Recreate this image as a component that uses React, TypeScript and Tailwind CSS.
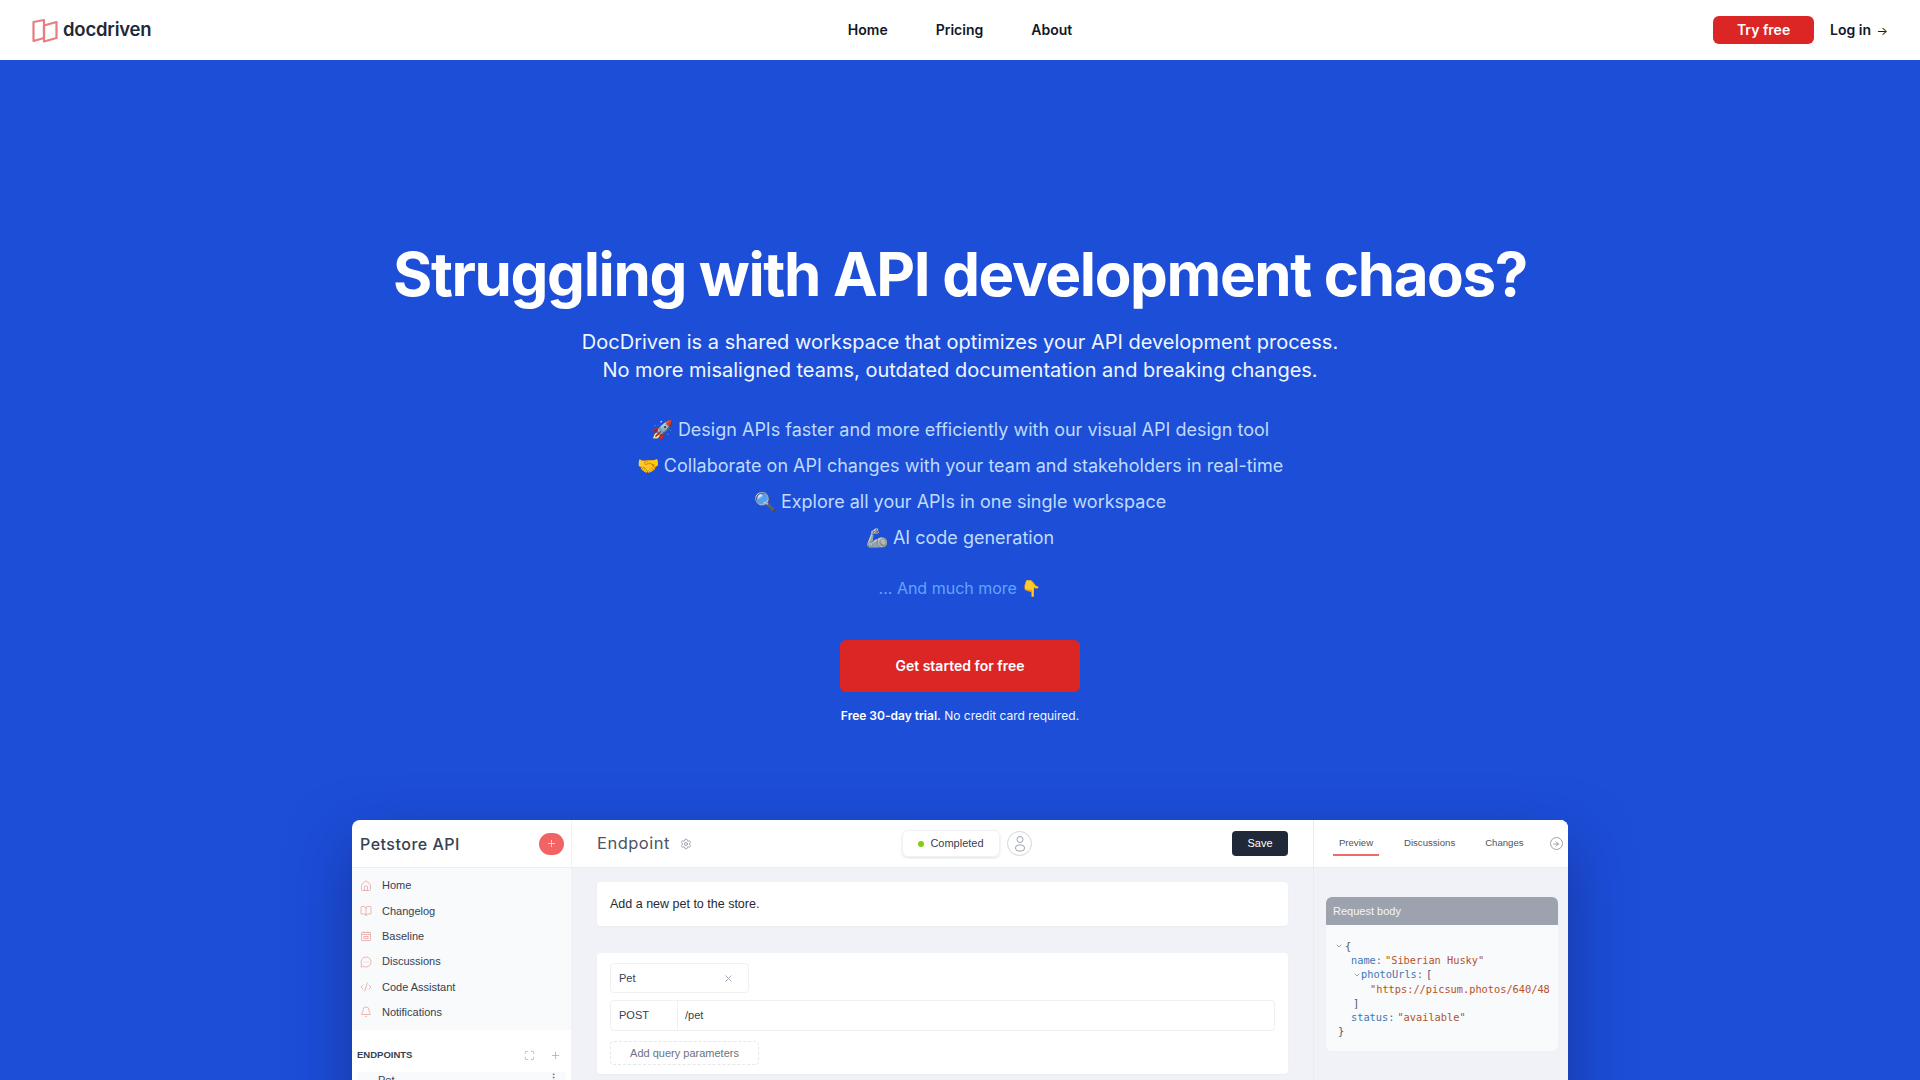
import { Home, BookOpen, MessageCircleMore, CodeXml, Bell, Plus, Maximize, Settings, X, ChevronDown, ArrowRight, MoreVertical } from "lucide-react"

const CalendarIcon = ({ size, color, strokeWidth }: { size: number; color: string; strokeWidth: number }) => (
  <svg width={size} height={size} viewBox="0 0 24 24" fill="none" stroke={color} strokeWidth={strokeWidth}>
    <rect x="3" y="5" width="18" height="16" rx="1" />
    <path d="M3 9h18M8 2v4M16 2v4" />
    <rect x="8" y="13" width="8" height="4" />
  </svg>
)

const sidebarItems = [
  { label: "Home", icon: Home },
  { label: "Changelog", icon: BookOpen },
  { label: "Baseline", icon: CalendarIcon },
  { label: "Discussions", icon: MessageCircleMore },
  { label: "Code Assistant", icon: CodeXml },
  { label: "Notifications", icon: Bell },
]

const bullets = [
  "🚀 Design APIs faster and more efficiently with our visual API design tool",
  "🤝 Collaborate on API changes with your team and stakeholders in real-time",
  "🔍 Explore all your APIs in one single workspace",
  "🦾 AI code generation",
]

const Logo = () => (
  <svg width="26" height="25" viewBox="0 0 26 25" fill="none" stroke="#e57f7f" strokeWidth="2.2" strokeLinejoin="round">
    <path d="M1.5 4 L12 2 V20 L1.5 23 Z" />
    <path d="M12 7.5 L24.5 4 V20 L12 23.5 Z" />
  </svg>
)

const Avatar = () => (
  <svg width="14" height="18" viewBox="0 0 14 18" fill="none" stroke="#9ca3af" strokeWidth="1">
    <circle cx="7" cy="4.5" r="3" />
    <rect x="2.5" y="10" width="9" height="6" rx="3" />
  </svg>
)

const App = () => {
  return (
    <div className="h-screen overflow-hidden bg-[#1d4ed8] font-['Inter',sans-serif]">
      <nav className="h-[60px] bg-white flex items-center justify-between pl-8 pr-[32px] relative">
        <div className="flex items-center gap-[5px] w-[400px]">
          <Logo />
          <span className="text-[18.5px] font-semibold text-[#1f2937] tracking-[-0.2px]">docdriven</span>
        </div>
        <ul className="flex gap-12 text-[14px] font-semibold text-[#111827] mb-[2px]">
          <li>Home</li>
          <li>Pricing</li>
          <li>About</li>
        </ul>
        <div className="flex items-center justify-end gap-4 w-[400px]">
          <button className="w-[101px] h-[28px] pb-[2px] rounded-md bg-[#dc2626] text-white text-[14px] font-semibold">Try free</button>
          <span className="text-[14px] font-semibold text-[#111827] mb-[2px]">Log in <span className="font-normal text-[12px] ml-[2px]">→</span></span>
        </div>
      </nav>

      <section className="flex flex-col items-center pt-[178px]">
        <h1 className="text-[60px] leading-[72px] font-bold text-white tracking-[-1.37px]">Struggling with API development chaos?</h1>
        <p className="mt-[18px] text-[20px] leading-[28px] text-[#eff6ff] text-center">
          DocDriven is a shared workspace that optimizes your API development process.
          <br />
          No more misaligned teams, outdated documentation and breaking changes.
        </p>
        <ul className="mt-[32px] flex flex-col gap-2 text-[18px] leading-[28px] text-[#bfdbfe] text-center">
          {bullets.map((b) => (
            <li key={b}>{b}</li>
          ))}
        </ul>
        <p className="mt-[22px] text-[16px] leading-[28px] text-[#60a5fa]">... And much more 👇</p>
        <button className="mt-[38px] w-[240px] h-[52px] pb-[2px] rounded-md bg-[#dc2626] text-white text-[14px] font-semibold">Get started for free</button>
        <p className="mt-[14px] text-[12px] leading-[20px] text-[#eff6ff]">
          <span className="font-semibold text-white">Free 30-day trial.</span> No credit card required.
        </p>

        <div className="mt-[94px] w-[1216px] h-[500px] shrink-0 flex rounded-t-lg overflow-hidden bg-white shadow-[0_25px_60px_rgba(15,35,120,0.6)] font-['Liberation_Sans',sans-serif]">
          {/* sidebar */}
          <aside className="w-[220px] shrink-0 border-r border-[#f1f2f5]">
            <div className="h-[48px] flex items-center justify-between pl-2 pr-[7px] border-b border-[#eceef2]">
              <span className="text-[16px] text-[#374151] font-['Inter',sans-serif] font-medium tracking-[0.5px]">Petstore API</span>
              <span className="w-[25px] h-[22px] rounded-full bg-[#f26464] flex items-center justify-center">
                <Plus size={11} color="#fbd5d5" />
              </span>
            </div>
            <ul className="bg-[#f9fafb] pt-[5px] h-[162px]">
              {sidebarItems.map((item) => (
                <li key={item.label} className="h-[25.3px] flex items-center gap-[10px] pl-[8px] text-[11px] text-[#374151]">
                  <item.icon size={12} color="#e8a0a0" strokeWidth={1.5} />
                  {item.label}
                </li>
              ))}
            </ul>
            <div className="flex items-center justify-between pl-[5px] pr-[10px] mt-[17px] h-[16px]">
              <span className="text-[9.5px] font-bold text-[#374151]">ENDPOINTS</span>
              <div className="flex items-center gap-[15px]">
                <Maximize size={11} color="#9ca3af" strokeWidth={1.5} />
                <Plus size={11} color="#9ca3af" strokeWidth={1.5} />
              </div>
            </div>
            <div className="mx-[5px] mt-[9px] h-[26px] bg-[#f9fafb] rounded flex items-start justify-between pl-[21px] pr-[7px] text-[11px] text-[#374151]">
              <span>Pet</span>
              <MoreVertical size={11} color="#6b7280" />
            </div>
          </aside>

          {/* main */}
          <main className="w-[742px] shrink-0 bg-[#f0f2f7] border-r border-[#e9ebf0]">
            <div className="h-[48px] bg-white border-b border-[#eceef2] flex items-center pl-[25px] pr-[25px]">
              <div className="flex items-center gap-[10px] w-[305px]">
                <span className="text-[16.5px] text-[#4b5563] font-['Inter',sans-serif] tracking-[0.5px]">Endpoint</span>
                <Settings size={12} color="#9ca3af" />
              </div>
              <span className="w-[98px] h-[27px] rounded-md border border-[#f0f1f4] shadow-sm flex items-center justify-center gap-[6px] text-[11px] text-[#374151]">
                <span className="w-[6px] h-[6px] rounded-full bg-[#84cc16]" />
                Completed
              </span>
              <span className="ml-[7px] w-[25px] h-[25px] rounded-full border border-[#d1d5db] flex items-center justify-center">
                <Avatar />
              </span>
              <button className="ml-auto w-[56px] h-[25px] rounded-sm bg-[#1f2937] text-white text-[11px]">Save</button>
            </div>
            <div className="pl-[25px] pr-[25px] pt-[14px]">
              <div className="h-[44px] bg-white rounded flex items-center px-[13px] text-[12.5px] text-[#1f2937] shadow-[0_1px_2px_rgba(0,0,0,0.03)]">Add a new pet to the store.</div>
              <div className="mt-[27px] bg-white rounded p-[13px] pt-[10px] pb-[9px] shadow-[0_1px_2px_rgba(0,0,0,0.03)]">
                <div className="w-[139px] h-[30px] border border-[#eef0f3] rounded flex items-center justify-between pl-2 pr-[14px] text-[11px] text-[#374151]">
                  Pet
                  <X size={11} color="#9ca3af" />
                </div>
                <div className="mt-[7px] h-[31px] flex text-[11px] text-[#374151]">
                  <div className="w-[68px] border border-[#eef0f3] rounded-l flex items-center pl-2">POST</div>
                  <div className="flex-1 border border-l-0 border-[#eef0f3] rounded-r flex items-center pl-[7px]">/pet</div>
                </div>
                <div className="mt-[10px] w-[149px] h-[24px] border border-dashed border-[#e5e7eb] rounded flex items-center justify-center text-[11px] text-[#6b7280]">Add query parameters</div>
              </div>
            </div>
          </main>

          {/* right panel */}
          <aside className="flex-1 bg-[#f0f2f7]">
            <div className="h-[48px] bg-white border-b border-[#eceef2] flex items-center text-[9.6px] text-[#4b5563]">
              <span className="ml-[19px] w-[46px] h-[24px] pt-[4px] text-center border-b-2 border-[#ef6b6b]">Preview</span>
              <span className="ml-[25px]">Discussions</span>
              <span className="ml-[30px]">Changes</span>
              <span className="ml-[26px] w-[13px] h-[13px] rounded-full border border-[#9ca3af] flex items-center justify-center">
                <ArrowRight size={8} color="#6b7280" />
              </span>
            </div>
            <div className="ml-[12px] mr-[10px] mt-[29px] rounded-md overflow-hidden bg-[#f9fafb]">
              <div className="h-[28px] bg-[#9ca3af] flex items-center px-[7px] text-[11px] text-[#f3f4f6]">Request body</div>
              <div className="h-[126px] pt-[14px] pl-[9px] font-['DejaVu_Sans_Mono',monospace] text-[10.3px] leading-[14.2px] whitespace-pre overflow-hidden">
                <div className="flex items-center text-[#4b5563]"><ChevronDown size={8} color="#6b7280" className="mr-[2px]" />{"{"}</div>
                <div className="pl-[16px]"><span className="text-[#3b78b5] mr-[3px]">name:</span><span className="text-[#b4532a]">"Siberian Husky"</span></div>
                <div className="pl-[18px] flex items-center"><ChevronDown size={8} color="#6b7280" /><span className="text-[#3b78b5] mr-[3px]">photoUrls:</span><span className="text-[#4b5563]">[</span></div>
                <div className="pl-[35px] text-[#b4532a]">"https://picsum.photos/640/48</div>
                <div className="pl-[18px] text-[#4b5563]">]</div>
                <div className="pl-[16px]"><span className="text-[#3b78b5] mr-[3px]">status:</span><span className="text-[#b4532a]">"available"</span></div>
                <div className="pl-[3px] text-[#4b5563]">{"}"}</div>
              </div>
            </div>
          </aside>
        </div>
      </section>
    </div>
  )
}

export default App
